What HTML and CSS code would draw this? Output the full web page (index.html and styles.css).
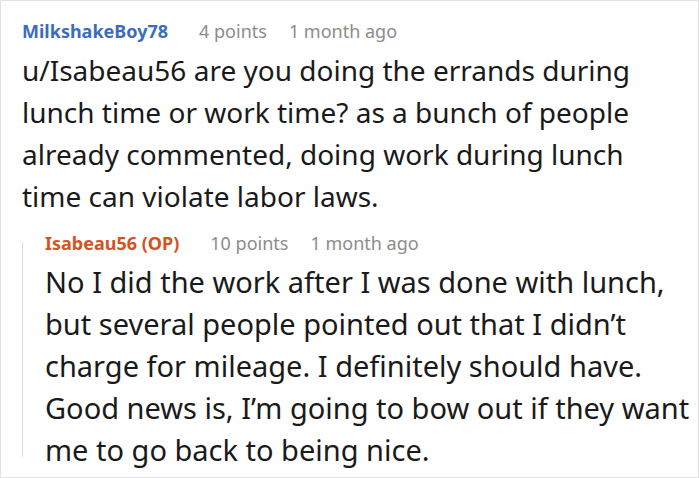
FILE: index.html
```html
<!DOCTYPE html>
<html>
<head>
<meta charset="utf-8">
<link rel="stylesheet" href="styles.css">
</head>
<body>
<div class="frame">
  <div class="comment">
    <div class="meta">
      <span class="user">MilkshakeBoy78</span>
      <span class="points">4 points</span>
      <span class="time">1 month ago</span>
    </div>
    <div class="body">u/Isabeau56 are you doing the errands during lunch time or work time? as a bunch of people already commented, doing work during lunch time can violate labor laws.</div>
    <div class="reply">
      <div class="thread"></div>
      <div class="reply-content">
        <div class="meta">
          <span class="user op">Isabeau56 (OP)</span>
          <span class="points">10 points</span>
          <span class="time">1 month ago</span>
        </div>
        <div class="body">No I did the work after I was done with lunch, but several people pointed out that I didn’t charge for mileage. I definitely should have. Good news is, I’m going to bow out if they want me to go back to being nice.</div>
      </div>
    </div>
  </div>
</div>
</body>
</html>
```
FILE: styles.css
```css
html, body {
  margin: 0;
  padding: 0;
  background: #fff;
}
.frame {
  width: 697px;
  height: 476px;
  border: 1px solid #e2e2e2;
  font-family: "Noto Sans", sans-serif;
  color: #1a1a1a;
  overflow: hidden;
}
.comment {
  padding: 18px 0 0 21px;
}
.meta {
  display: flex;
  align-items: baseline;
  font-size: 18px;
  line-height: 24px;
  color: #8c8c8c;
}
.user {
  font-weight: bold;
  color: #3b6cc0;
  margin-right: 31px;
}
.user.op {
  color: #d4531f;
}
.points {
  margin-right: 22px;
}
.body {
  font-size: 28px;
  line-height: 42px;
  margin-top: 6px;
  width: 650px;
}
.reply {
  display: flex;
  margin-top: 14px;
}
.thread {
  width: 1px;
  background: #dcdcdc;
  margin: 11px 0 14px 0;
}
.reply-content {
  padding-left: 22px;
}
.reply-content .body {
  font-size: 29px;
  width: 645px;
}
```
